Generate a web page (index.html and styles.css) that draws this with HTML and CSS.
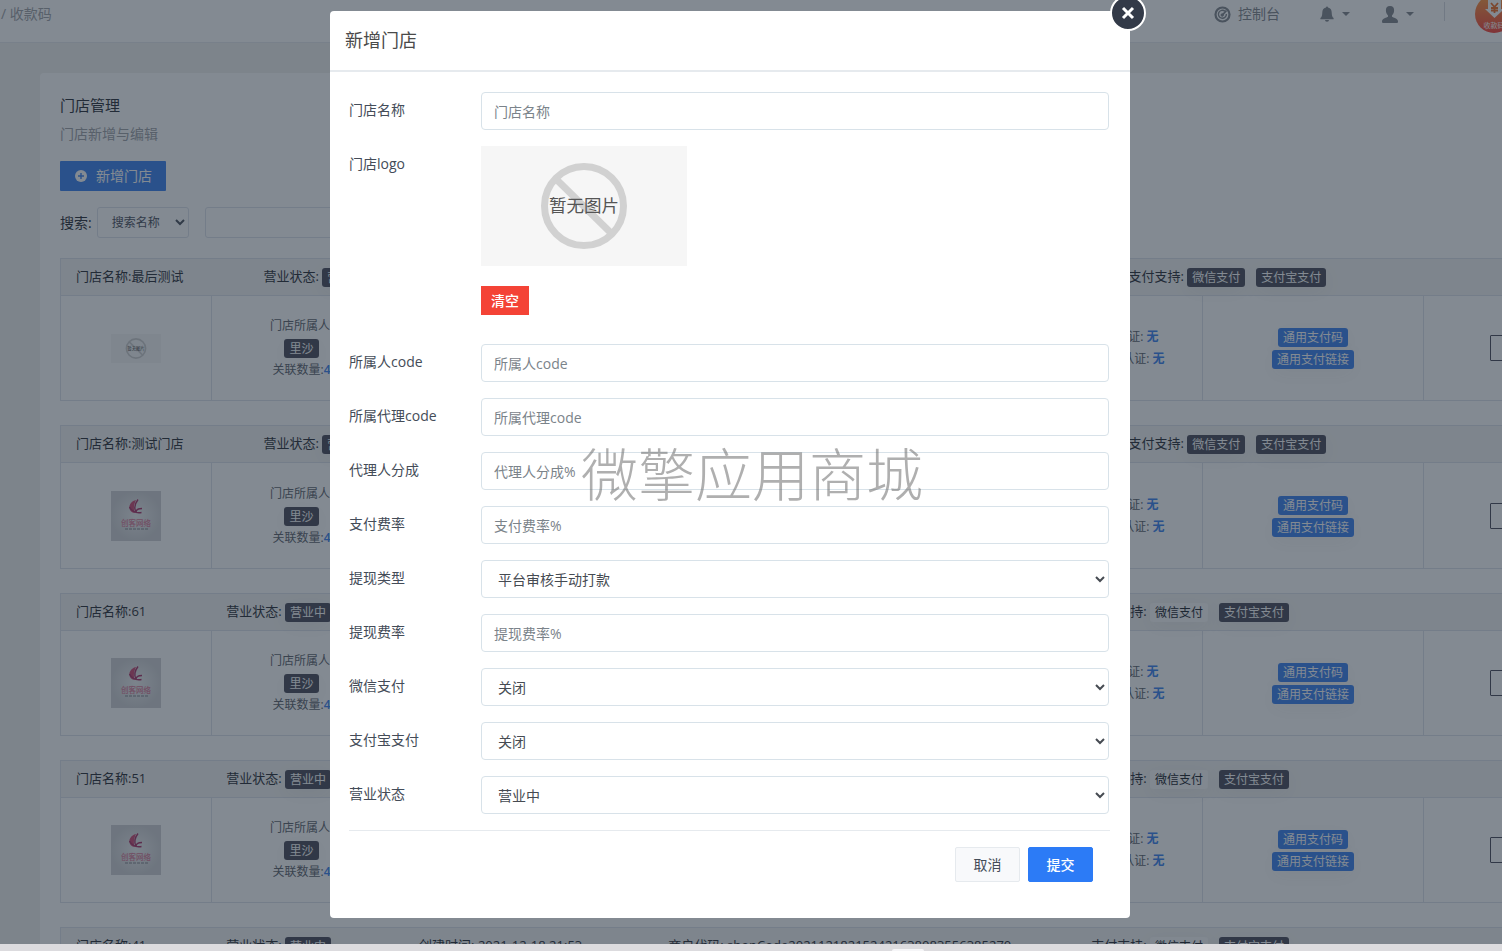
FILE: index.html
```html
<!DOCTYPE html>
<html lang="zh-CN">
<head>
<meta charset="utf-8">
<title>门店管理</title>
<link rel="stylesheet" href="styles.css">
</head>
<body>
<svg class="defs" aria-hidden="true">
  <symbol id="no-image" viewBox="0 0 206 120">
    <rect width="206" height="120" fill="#f6f6f6"/>
    <circle cx="103" cy="60" r="39.500" fill="none" stroke="#d1d1d1" stroke-width="7"/>
    <path d="M75 33 131 88" stroke="#d1d1d1" stroke-width="7"/>
    <text x="103" y="66" text-anchor="middle" font-size="17.500" fill="#555">暂无图片</text>
  </symbol>
  <symbol id="brand" viewBox="0 0 50 50">
    <defs><radialGradient id="glow"><stop offset="0" stop-color="#f0f1f2"/><stop offset="1" stop-color="#d4d5d8"/></radialGradient></defs>
    <rect width="50" height="50" fill="url(#glow)"/>
    <path d="M25 9c-5 1-8 6-6 10 1 2 3 3 5 3-2-4-1-9 1-13z" fill="#d0587f"/>
    <path d="M27 8.500c-3 4-4 9-2 12.500M18.500 16c2 4 5 6.500 12 5.500M31 17.500c-4 0-6 1.500-6 4" fill="none" stroke="#b04474" stroke-width="1.400"/>
    <text x="25" y="35" text-anchor="middle" font-size="7.500" fill="#dc88a2" font-weight="500">创客网络</text>
    <path d="M14 38h23" stroke="#8b8d94" stroke-width="1" stroke-dasharray="3 1"/>
  </symbol>
</svg>

<div class="app">
  <header class="topbar">
    <nav class="crumbs">/ 收款码</nav>
    <div class="tools">
      <a class="tool console" href="#">
        <svg width="17" height="17" viewBox="0 0 17 17" fill="none" stroke="currentColor"><circle cx="8.500" cy="8.500" r="7" stroke-width="2.200"/><path d="M11 5.200A4 4 0 1 0 12.400 8" stroke-width="1.400"/><path d="M8 9.500 12.500 4.500" stroke-width="1.800"/><circle cx="8.200" cy="9" r="1.200" fill="currentColor"/></svg>
        控制台</a>
      <button class="tool bell" type="button" aria-label="通知">
        <svg width="14" height="16" viewBox="0 0 14 16" fill="currentColor"><path d="M6 1.500a1 1 0 0 1 2 0c2.800.6 3.600 2.500 3.700 5 .1 3 .5 4.500 1.900 5.500v1.200H.4V12c1.400-1 1.800-2.500 1.900-5.500.1-2.500.9-4.400 3.700-5zM5 14h4a2 1.700 0 0 1-4 0z"/></svg>
        <span class="caret"></span>
      </button>
      <button class="tool user" type="button" aria-label="用户">
        <svg width="16" height="17" viewBox="0 0 16 17" fill="currentColor"><path d="M8 0c3 0 4.300 2 4.100 4.700C12 7 11 8.300 10 9.400v1.400c1.200 1 5.800 1.500 6 4.700 0 1-.5 1.500-1.500 1.500h-13C.5 17 0 16.500 0 15.500c.2-3.200 4.800-3.700 6-4.700V9.400C5 8.300 4 7 3.900 4.700 3.700 2 5 0 8 0z"/></svg>
        <span class="caret"></span>
      </button>
      <span class="divider"></span>
      <svg class="avatar" width="38" height="38" viewBox="0 0 38 38"><defs><linearGradient id="sun" x2="0" y2="1"><stop offset="0" stop-color="#ffa64e"/><stop offset="1" stop-color="#f8524a"/></linearGradient></defs><circle cx="19" cy="19" r="19" fill="url(#sun)"/><path d="M13 3h13v11h3l-9.500 9L10 14h3z" fill="#fff"/><path d="m16 8 3.500 4L23 8M19.500 12v6M16 13h7M16 15.500h7" fill="none" stroke="#f07a3b" stroke-width="1.800"/><text x="19" y="33" text-anchor="middle" font-size="7" fill="#fff">收款码</text></svg>
    </div>
  </header>

  <main class="card">
    <h1 class="card-title">门店管理</h1>
    <p class="card-sub">门店新增与编辑</p>
    <button class="add" type="button"><svg width="12" height="12" viewBox="0 0 12 12"><circle cx="6" cy="6" r="6" fill="#fff"/><path d="M6 3v6M3 6h6" stroke="#4d8df0" stroke-width="1.400"/></svg>新增门店</button>
    <form class="search">
      <label for="field">搜索:</label>
      <select id="field" class="search-field"><option>搜索名称</option></select>
      <input class="search-text" type="text" aria-label="关键词">
    </form>

    <table class="store">
      <colgroup><col class="c-logo"><col class="c-owner"><col><col class="c-auth"><col class="c-link"><col class="c-act"></colgroup>
      <tr class="head"><th colspan="6"><div class="facts"><span>门店名称:最后测试</span><span class="state">营业状态: <b class="tag">营业中</b></span><span class="made">创建时间: 2021-12-18 21:53</span><span>商户代码: shopCode202112182152421638083556385270</span><span>支付支持: <b class="tag">微信支付</b><b class="tag next">支付宝支付</b></span></div></th></tr>
      <tr class="body"><td><svg class="thumb" width="50" height="29"><use href="#no-image"/></svg></td><td>门店所属人:<br><b class="tag">里沙</b><br>关联数量:<strong>4</strong></td><td></td><td>微信认证: <strong>无</strong><br>支付宝认证: <strong>无</strong></td><td><a class="tag link" href="#">通用支付码</a><br><a class="tag link" href="#">通用支付链接</a></td><td class="act"><button type="button" aria-label="编辑"></button></td></tr>
    </table>

    <table class="store">
      <colgroup><col class="c-logo"><col class="c-owner"><col><col class="c-auth"><col class="c-link"><col class="c-act"></colgroup>
      <tr class="head"><th colspan="6"><div class="facts"><span>门店名称:测试门店</span><span class="state">营业状态: <b class="tag">营业中</b></span><span class="made">创建时间: 2021-12-18 21:53</span><span>商户代码: shopCode202112182152421638083556385270</span><span>支付支持: <b class="tag">微信支付</b><b class="tag next">支付宝支付</b></span></div></th></tr>
      <tr class="body tall"><td><svg class="thumb" width="50" height="50"><use href="#brand"/></svg></td><td>门店所属人:<br><b class="tag">里沙</b><br>关联数量:<strong>4</strong></td><td></td><td>微信认证: <strong>无</strong><br>支付宝认证: <strong>无</strong></td><td><a class="tag link" href="#">通用支付码</a><br><a class="tag link" href="#">通用支付链接</a></td><td class="act"><button type="button" aria-label="编辑"></button></td></tr>
    </table>

    <table class="store">
      <colgroup><col class="c-logo"><col class="c-owner"><col><col class="c-auth"><col class="c-link"><col class="c-act"></colgroup>
      <tr class="head"><th colspan="6"><div class="facts"><span>门店名称:61</span><span class="state">营业状态: <b class="tag">营业中</b></span><span class="made">创建时间: 2021-12-18 21:53</span><span>商户代码: shopCode202112182152421638083556385270</span><span>支付支持: <b class="tag off">微信支付</b><b class="tag next">支付宝支付</b></span></div></th></tr>
      <tr class="body"><td><svg class="thumb" width="50" height="50"><use href="#brand"/></svg></td><td>门店所属人:<br><b class="tag">里沙</b><br>关联数量:<strong>4</strong></td><td></td><td>微信认证: <strong>无</strong><br>支付宝认证: <strong>无</strong></td><td><a class="tag link" href="#">通用支付码</a><br><a class="tag link" href="#">通用支付链接</a></td><td class="act"><button type="button" aria-label="编辑"></button></td></tr>
    </table>

    <table class="store">
      <colgroup><col class="c-logo"><col class="c-owner"><col><col class="c-auth"><col class="c-link"><col class="c-act"></colgroup>
      <tr class="head"><th colspan="6"><div class="facts"><span>门店名称:51</span><span class="state">营业状态: <b class="tag">营业中</b></span><span class="made">创建时间: 2021-12-18 21:53</span><span>商户代码: shopCode202112182152421638083556385270</span><span>支付支持: <b class="tag off">微信支付</b><b class="tag next">支付宝支付</b></span></div></th></tr>
      <tr class="body"><td><svg class="thumb" width="50" height="50"><use href="#brand"/></svg></td><td>门店所属人:<br><b class="tag">里沙</b><br>关联数量:<strong>4</strong></td><td></td><td>微信认证: <strong>无</strong><br>支付宝认证: <strong>无</strong></td><td><a class="tag link" href="#">通用支付码</a><br><a class="tag link" href="#">通用支付链接</a></td><td class="act"><button type="button" aria-label="编辑"></button></td></tr>
    </table>

    <table class="store">
      <colgroup><col class="c-logo"><col class="c-owner"><col><col class="c-auth"><col class="c-link"><col class="c-act"></colgroup>
      <tr class="head"><th colspan="6"><div class="facts"><span>门店名称:41</span><span class="state">营业状态: <b class="tag">营业中</b></span><span class="made">创建时间: 2021-12-18 21:53</span><span>商户代码: shopCode202112182152421638083556385270</span><span>支付支持: <b class="tag off">微信支付</b><b class="tag next">支付宝支付</b></span></div></th></tr>
    </table>
  </main>
</div>

<div class="overlay">
  <section class="modal" role="dialog" aria-labelledby="dlg-title">
    <button class="close" type="button" aria-label="关闭"><svg width="14" height="14" viewBox="0 0 14 14"><path d="M2 2 12 12M12 2 2 12" stroke="#fff" stroke-width="3"/></svg></button>
    <h2 class="modal-title" id="dlg-title">新增门店</h2>
    <form class="form">
      <div class="row"><label for="name">门店名称</label><input id="name" class="control" placeholder="门店名称"></div>
      <div class="row logo-row"><label for="clear">门店logo</label><div class="logo-box"><svg class="preview" width="206" height="120"><use href="#no-image"/></svg><button id="clear" class="clear" type="button">清空</button></div></div>
      <div class="row"><label for="owner">所属人code</label><input id="owner" class="control" placeholder="所属人code"></div>
      <div class="row"><label for="agent">所属代理code</label><input id="agent" class="control" placeholder="所属代理code"></div>
      <div class="row"><label for="share">代理人分成</label><input id="share" class="control" placeholder="代理人分成%"></div>
      <div class="row"><label for="payrate">支付费率</label><input id="payrate" class="control" placeholder="支付费率%"></div>
      <div class="row"><label for="wtype">提现类型</label><select id="wtype" class="control"><option>平台审核手动打款</option></select></div>
      <div class="row"><label for="wrate">提现费率</label><input id="wrate" class="control" placeholder="提现费率%"></div>
      <div class="row"><label for="wechat">微信支付</label><select id="wechat" class="control"><option>关闭</option></select></div>
      <div class="row"><label for="alipay">支付宝支付</label><select id="alipay" class="control"><option>关闭</option></select></div>
      <div class="row"><label for="status">营业状态</label><select id="status" class="control"><option>营业中</option></select></div>
      <div class="actions"><button class="btn" type="button">取消</button><button class="btn primary" type="submit">提交</button></div>
    </form>
    <div class="watermark">微擎应用商城</div>
  </section>
</div>
<div class="shelf"><span class="shelf-tab"></span></div>
</body>
</html>
```
FILE: styles.css
```css
* { box-sizing: border-box; }
body {
  margin: 0;
  height: 100vh;
  overflow: hidden;
  background: #f3f3f1;
  color: #3d4149;
  font: 400 14px/20px "Open Sans", "Noto Sans CJK SC", sans-serif;
}
button, input, select { font: inherit; color: inherit; margin: 0; }
a { color: inherit; text-decoration: none; }
.defs { position: absolute; width: 0; height: 0; }

.app { width: calc(100% + 101px); height: 100%; overflow: hidden; }
.topbar {
  display: flex;
  justify-content: space-between;
  height: 43px;
  padding: 0 90px 14px 1px;
  background: #fff;
  border-bottom: 1px solid #e9ebee;
  color: #a8aaae;
}
.crumbs { line-height: 28px; }
.tools { display: flex; align-items: center; color: #8c9096; }
.tool {
  display: flex;
  align-items: center;
  gap: 8px;
  padding: 0;
  border: 0;
  background: none;
}
.console { margin-right: 40px; gap: 7px; }
.bell { margin-right: 32px; }
.user { margin-right: 30px; }
.caret { border: 4px solid transparent; border-top-color: currentColor; border-bottom: 0; }
.divider { width: 1px; height: 19px; margin: 0 30px 6px 0; background: #dadde2; }
.avatar { flex: none; }

.card {
  margin: 30px 0 0 40px;
  padding: 20px 60px 20px 20px;
  background: #fff;
  border-radius: 4px;
}
.card-title { margin: 0 0 7px; font-size: 15px; line-height: 24px; font-weight: 400; }
.card-sub { margin: 0 0 17px; color: #a8aaae; }
.add {
  display: flex;
  align-items: center;
  gap: 9px;
  height: 30px;
  padding: 0 14px 0 15px;
  border: 0;
  border-radius: 1px;
  background: #4d8df0;
  color: #fff;
}
.search { display: flex; align-items: center; height: 31px; margin: 16px 0 20px; }
.search-field, .search-text {
  height: 31px;
  border: 1px solid #e1e5ed;
  border-radius: 3px;
  background: #fff;
}
.search-field { width: 92px; margin: 0 16px 0 5px; padding: 0 0 0 10px; color: #5b606b; font-size: 12px; }
.search-text { width: 200px; }

.store {
  width: 100%;
  margin-bottom: 24px;
  table-layout: fixed;
  border-collapse: collapse;
  text-align: center;
  font-size: 12px;
  line-height: 22px;
  color: #6c7078;
}
.store th, .store td { padding: 0; border: 1px solid #e1e5ed; font-weight: 400; }
.c-logo { width: 151px; }
.c-owner { width: 180px; }
.c-auth { width: 154px; }
.c-link { width: 221px; }
.c-act { width: 119px; }
.head { height: 37px; background: #f5f5f4; color: #3d4149; font-size: 13px; }
.store .head th { padding-bottom: 2px; }
.body { height: 105px; }
.tall { height: 106px; }
.facts { display: flex; gap: 80px; padding-left: 15px; white-space: nowrap; }
.state { padding-right: 8px; }
.made { padding-right: 6px; }
.tag {
  display: inline-block;
  padding: 0 5px;
  border-radius: 3px;
  background: #5a5b68;
  color: #fff;
  font-size: 12px;
  line-height: 19px;
  font-weight: 400;
  vertical-align: middle;
  box-shadow: 0 5px 20px rgba(60, 60, 60, 0.05);
}
.next { margin-left: 11px; }
.off { background: #fafafa; color: #33373f; }
.link { background: #4d8df0; }
.store strong { color: #4d8df0; font-weight: 600; }
.thumb { display: block; margin: 0 auto; }
.store .act { padding-left: 66px; text-align: left; }
.act button { display: block; width: 48px; height: 26px; padding: 0; border: 1px solid #5a5b68; border-radius: 1px; background: #fff; }

.overlay {
  position: fixed;
  inset: 0;
  display: flex;
  justify-content: center;
  align-items: flex-start;
  padding: 11px 42px 0 0;
  background: rgba(7, 21, 37, 0.5);
}
.modal {
  position: relative;
  width: 800px;
  max-width: 100%;
  padding-bottom: 36px;
  background: #fff;
  border-radius: 4px;
}
.close {
  position: absolute;
  top: -16px;
  right: -16px;
  display: flex;
  align-items: center;
  justify-content: center;
  width: 36px;
  height: 36px;
  padding: 0;
  border: 2px solid #fff;
  border-radius: 50%;
  background: #333a48;
}
.modal-title {
  margin: 0;
  padding: 0 15px;
  border-bottom: 2px solid #e6eaee;
  color: #4a4a4a;
  font-size: 18px;
  line-height: 59px;
  font-weight: 400;
}
.form { padding: 20px 20px 0 19px; color: #444c58; }
.row { display: grid; grid-template-columns: 132px 1fr; align-items: start; margin: 0 1px 16px 0; }
.row label { line-height: 36px; }
.control {
  width: 100%;
  height: 38px;
  padding: 0 12px;
  border: 1px solid #d8e2e9;
  border-radius: 4px;
  background: #fff;
  color: #464b52;
}
select.control { padding-right: 0; }
.control::placeholder { color: #7b838a; opacity: 1; }
.logo-row { margin-bottom: 29px; }
.logo-box { display: flex; flex-direction: column; align-items: flex-start; gap: 20px; }
.preview { display: block; }
.clear { height: 29px; padding: 0 10px; border: 0; background: #f44336; color: #fff; font-weight: 500; }
.actions {
  display: flex;
  justify-content: flex-end;
  gap: 8px;
  padding: 16px 17px 0 0;
  border-top: 1px solid #e6eaee;
}
.btn { width: 65px; height: 35px; padding: 0; border: 1px solid #e6eaee; border-radius: 2px; background: #f8f9fb; }
.primary { border-color: #2c7bf6; background: #2c7bf6; color: #fff; font-weight: 500; }
.watermark {
  position: absolute;
  top: 423px;
  left: 251px;
  color: rgba(110, 110, 110, 0.55);
  font-size: 57px;
  font-weight: 300;
  line-height: 80px;
  white-space: nowrap;
  pointer-events: none;
}
.shelf { position: fixed; left: 0; right: 0; bottom: 0; height: 7px; overflow: hidden; background: #dcdbde; }
.shelf-tab { display: block; width: 32px; height: 2px; margin: 5px 0 0 892px; border-radius: 2px 2px 0 0; background: #f6f6f8; }
```
